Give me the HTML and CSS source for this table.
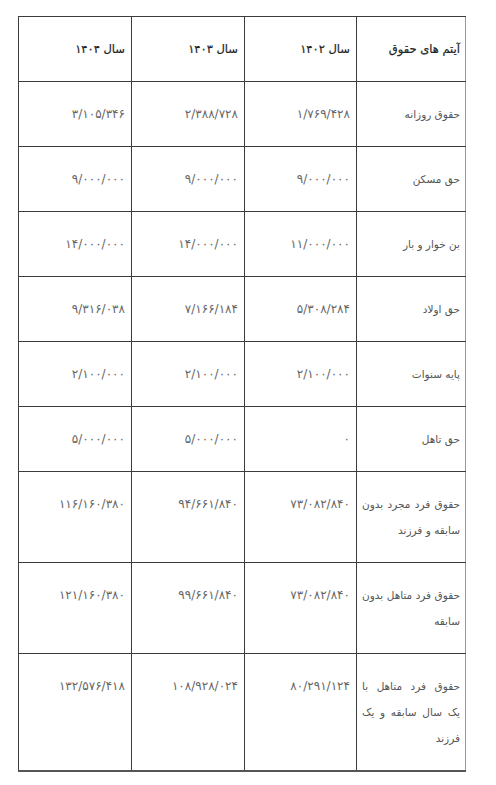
FILE: index.html
```html
<!DOCTYPE html>
<html lang="fa" dir="rtl">
<head>
<meta charset="utf-8">
<title>جدول حقوق</title>
<link rel="stylesheet" href="styles.css">
</head>
<body>
<div class="page">
<table class="salary">
<colgroup>
<col class="c-item"><col class="c-y1"><col class="c-y2"><col class="c-y3">
</colgroup>
<thead>
<tr><th>آیتم های حقوق</th><th>سال ۱۴۰۲</th><th>سال ۱۴۰۳</th><th>سال ۱۴۰۴</th></tr>
</thead>
<tbody>
<tr><td class="item">حقوق روزانه</td><td>۱/۷۶۹/۴۲۸</td><td>۲/۳۸۸/۷۲۸</td><td>۳/۱۰۵/۳۴۶</td></tr>
<tr><td class="item">حق مسکن</td><td>۹/۰۰۰/۰۰۰</td><td>۹/۰۰۰/۰۰۰</td><td>۹/۰۰۰/۰۰۰</td></tr>
<tr><td class="item">بن خوار و بار</td><td>۱۱/۰۰۰/۰۰۰</td><td>۱۴/۰۰۰/۰۰۰</td><td>۱۴/۰۰۰/۰۰۰</td></tr>
<tr><td class="item">حق اولاد</td><td>۵/۳۰۸/۲۸۴</td><td>۷/۱۶۶/۱۸۴</td><td>۹/۳۱۶/۰۳۸</td></tr>
<tr><td class="item">پایه سنوات</td><td>۲/۱۰۰/۰۰۰</td><td>۲/۱۰۰/۰۰۰</td><td>۲/۱۰۰/۰۰۰</td></tr>
<tr><td class="item">حق تاهل</td><td>۰</td><td>۵/۰۰۰/۰۰۰</td><td>۵/۰۰۰/۰۰۰</td></tr>
<tr><td class="item">حقوق فرد مجرد بدون سابقه و فرزند</td><td>۷۳/۰۸۲/۸۴۰</td><td>۹۴/۶۶۱/۸۴۰</td><td>۱۱۶/۱۶۰/۳۸۰</td></tr>
<tr><td class="item">حقوق فرد متاهل بدون سابقه</td><td>۷۳/۰۸۲/۸۴۰</td><td>۹۹/۶۶۱/۸۴۰</td><td>۱۲۱/۱۶۰/۳۸۰</td></tr>
<tr><td class="item">حقوق فرد متاهل با یک سال سابقه و یک فرزند</td><td>۸۰/۲۹۱/۱۲۴</td><td>۱۰۸/۹۲۸/۰۲۴</td><td>۱۳۲/۵۷۶/۴۱۸</td></tr>
</tbody>
</table>
</div>
</body>
</html>
```
FILE: styles.css
```css
html, body {
  margin: 0;
  padding: 0;
  background: #ffffff;
}
.page {
  padding: 16px 30px 0 19px;
  font-family: "DejaVu Sans", sans-serif;
}
.salary {
  direction: rtl;
  border-collapse: collapse;
  table-layout: fixed;
  width: 447px;
  border: 1px solid #888;
  border-bottom: 2px solid #555;
}
.c-item { width: 109px; }
.c-y1 { width: 112px; }
.c-y2 { width: 113px; }
.c-y3 { width: 113px; }
.salary th,
.salary td {
  border: 1px solid #3c3c3c;
  padding: 19px 6px 19px 5px;
  line-height: 26px;
  vertical-align: top;
  text-align: right;
  font-size: 11px;
}
.salary th {
  color: #222;
  font-weight: normal;
  font-size: 11.5px;
  -webkit-text-stroke: 0.2px #222;
}
.salary td {
  color: #666;
  font-size: 12px;
  letter-spacing: 1px;
}
.salary td.item {
  text-align: justify;
  text-align-last: right;
  color: #555;
  font-size: 10.5px;
  letter-spacing: 0;
  word-spacing: 0;
}
.salary th:first-child,
.salary td:first-child {
  border-right-color: #999;
  padding-right: 5px;
}
```
